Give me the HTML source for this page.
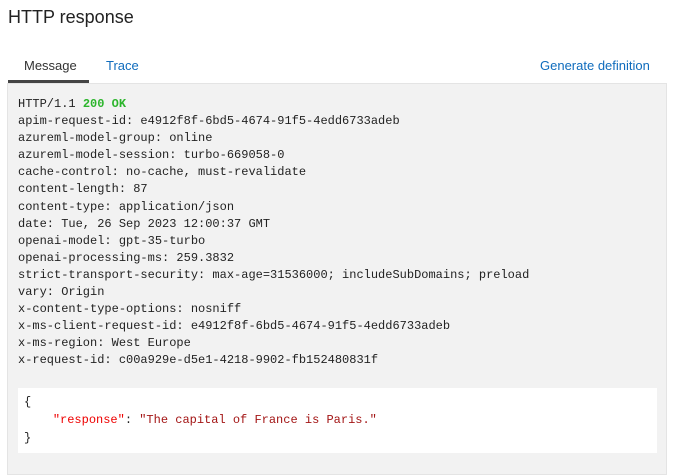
<!DOCTYPE html>
<html><head><style>
body{margin:0;width:673px;height:459px;overflow:hidden;background:#fff;font-family:"Liberation Sans",sans-serif;}
.t{position:absolute;left:8px;top:7px;font-size:18px;color:#222;}
.tab{position:absolute;top:58px;font-size:13px;}
.ul{position:absolute;left:8px;top:80px;width:81px;height:3px;background:#444;}
.box{position:absolute;left:7px;top:83px;width:658px;height:390px;background:#f2f2f2;border:1px solid #e4e4e4;}
pre{margin:0;font-family:"Liberation Mono",monospace;font-size:12px;line-height:17.1px;color:#222;}
.h{position:absolute;left:10px;top:12px;}
.j{position:absolute;left:10px;top:304px;width:633px;height:60px;background:#fff;padding:5px 0 0 6px;}
</style></head><body>
<div class="t">HTTP response</div>
<div class="tab" style="left:24px;color:#333">Message</div>
<div class="tab" style="left:106px;color:#0f6cbd">Trace</div>
<div class="tab" style="left:540px;color:#0f6cbd">Generate definition</div>
<div class="ul"></div>
<div class="box">
<pre class="h">HTTP/1.1 <b style="color:#2cb52c">200 OK</b>
apim-request-id: e4912f8f-6bd5-4674-91f5-4edd6733adeb
azureml-model-group: online
azureml-model-session: turbo-669058-0
cache-control: no-cache, must-revalidate
content-length: 87
content-type: application/json
date: Tue, 26 Sep 2023 12:00:37 GMT
openai-model: gpt-35-turbo
openai-processing-ms: 259.3832
strict-transport-security: max-age=31536000; includeSubDomains; preload
vary: Origin
x-content-type-options: nosniff
x-ms-client-request-id: e4912f8f-6bd5-4674-91f5-4edd6733adeb
x-ms-region: West Europe
x-request-id: c00a929e-d5e1-4218-9902-fb152480831f</pre>
<div class="j"><pre style="line-height:18px">{
    <span style="color:#e00">"response"</span>: <span style="color:#a31515">"The capital of France is Paris."</span>
}</pre></div>
</div>
</body></html>
